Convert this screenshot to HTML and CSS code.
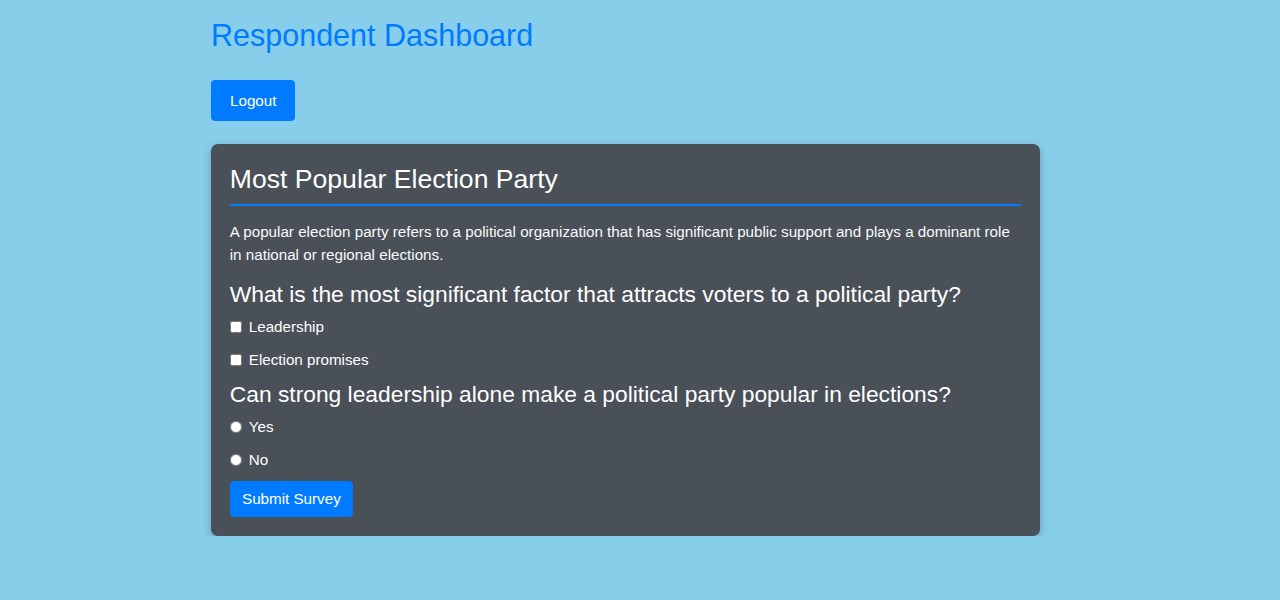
FILE: index.html
```html
<!DOCTYPE html>
<html lang="en">
<head>
<meta charset="utf-8">
<title>Respondent Dashboard</title>
<link rel="stylesheet" href="styles.css">
</head>
<body>
<div class="container">
  <h2 class="page-title">Respondent Dashboard</h2>
  <button class="btn btn-logout" type="button">Logout</button>
  <div class="survey-card">
    <h3 class="survey-title">Most Popular Election Party</h3>
    <p class="survey-desc">A popular election party refers to a political organization that has significant public support and plays a dominant role in national or regional elections.</p>
    <form class="survey-form">
      <h4 class="question">What is the most significant factor that attracts voters to a political party?</h4>
      <div class="option"><input type="checkbox" id="q1a"><label for="q1a">Leadership</label></div>
      <div class="option"><input type="checkbox" id="q1b"><label for="q1b">Election promises</label></div>
      <h4 class="question">Can strong leadership alone make a political party popular in elections?</h4>
      <div class="option"><input type="radio" name="q2" id="q2a"><label for="q2a">Yes</label></div>
      <div class="option"><input type="radio" name="q2" id="q2b"><label for="q2b">No</label></div>
      <button class="btn btn-submit" type="button">Submit Survey</button>
    </form>
  </div>
</div>
</body>
</html>
```

FILE: styles.css
```css
html { font-size: 15px; }
body {
  margin: 0;
  background: #87ceeb;
  font-family: "Liberation Sans", Arial, sans-serif;
  font-size: 15.2px;
  line-height: 22.5px;
  color: #212529;
}
.container {
  width: 829px;
  margin-left: 211px;
  padding-top: 17px;
}
.page-title {
  margin: 0 0 27px;
  font-size: 30.5px;
  font-weight: 400;
  line-height: 36px;
  color: #007bff;
}
.btn {
  display: inline-block;
  font-family: inherit;
  font-size: 15.2px;
  line-height: 22.5px;
  color: #fff;
  background: #007bff;
  border: 1px solid #007bff;
  border-radius: 3.75px;
  cursor: pointer;
}
.btn-logout {
  padding: 9px 18px 7.5px;
}
.btn-submit {
  padding: 5.625px 11.25px;
}
.survey-card {
  margin-top: 23px;
  background: #495057;
  border-radius: 7px;
  padding: 19.75px 18.75px 18.75px;
  box-shadow: 0 3px 8px rgba(0, 0, 0, 0.25);
  color: #f8f9fa;
}
.survey-title {
  margin: 0 0 15px;
  padding-bottom: 9px;
  border-bottom: 2px solid #007bff;
  font-size: 26.6px;
  font-weight: 400;
  line-height: 31.5px;
  color: #fff;
}
.survey-desc {
  margin: 0 0 15px;
}
.survey-form { margin: 0; }
.question {
  margin: 0 0 7.5px;
  font-size: 22.8px;
  font-weight: 400;
  line-height: 27px;
  color: #fff;
}
.option {
  display: flex;
  align-items: center;
  margin-bottom: 10.25px;
}
.option input {
  width: 12px;
  height: 12px;
  margin: 0 7px 0 0;
}
.option label { color: #fff; }
```
